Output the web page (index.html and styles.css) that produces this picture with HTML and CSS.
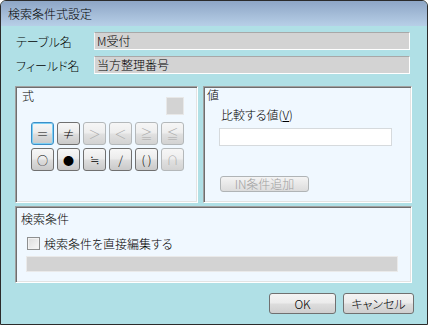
FILE: index.html
```html
<!DOCTYPE html>
<html lang="ja">
<head>
  <meta charset="UTF-8" />
  <title>検索条件式設定</title>
  <link rel="stylesheet" href="styles.css">
</head>
<body>
  <div class="window">
    <div class="titlebar">検索条件式設定</div>
    <div class="content">
      <div class="field-row">
        <span class="label">テーブル名</span>
        <div class="readonly">M受付</div>
      </div>
      <div class="field-row">
        <span class="label">フィールド名</span>
        <div class="readonly">当方整理番号</div>
      </div>

      <div class="groups">
        <div class="group group-expr">
          <div class="expr-top">
            <span class="legend">式</span>
            <span class="swatch"></span>
          </div>
          <div class="op-grid">
            <button class="op focus">＝</button>
            <button class="op">≠</button>
            <button class="op" disabled>＞</button>
            <button class="op" disabled>＜</button>
            <button class="op" disabled>≧</button>
            <button class="op" disabled>≦</button>
            <button class="op op-small">○</button>
            <button class="op op-small">●</button>
            <button class="op">≒</button>
            <button class="op">/</button>
            <button class="op">( )</button>
            <button class="op" disabled>∩</button>
          </div>
        </div>

        <div class="group group-value">
          <div class="legend legend-value">値</div>
          <div class="compare-label">比較する値(<u>V</u>)</div>
          <input class="compare-input" type="text">
          <button class="btn btn-in" disabled>IN条件追加</button>
        </div>
      </div>

      <div class="group group-cond">
        <div class="legend legend-cond">検索条件</div>
        <label class="check-row">
          <span class="checkbox"></span>
          <span>検索条件を直接編集する</span>
        </label>
        <div class="cond-field"></div>
      </div>

      <div class="actions">
        <button class="btn btn-ok">OK</button>
        <button class="btn btn-cancel">キャンセル</button>
      </div>
    </div>
  </div>
</body>
</html>
```

FILE: styles.css
```css
body { margin: 0; font-family: "Noto Sans CJK JP", "Liberation Sans", sans-serif; font-size: 12px; font-weight: 300; color: #000; }

.window { width: 428px; height: 325px; box-sizing: border-box; border: 1px solid #2b2b2b; border-radius: 6px 6px 0 0; background: #b0e0e6; overflow: hidden; }
.titlebar { height: 25px; line-height: 26px; padding-left: 7px; background: linear-gradient(#8ea6c6, #b7cfe7); font-feature-settings: "palt"; }
.content { padding: 6px 14px 0 14px; }

.field-row { display: flex; align-items: center; height: 18px; margin-bottom: 6px; }
.label { width: 78px; margin-left: 1px; font-feature-settings: "palt"; }
.readonly { width: 316px; height: 18px; box-sizing: border-box; padding-left: 2px; line-height: 16px; background: #d3d3d3; border: 1px solid #fff; border-top-color: #a8a8a8; border-left-color: #f4f4f4; }

.groups { display: flex; gap: 5px; margin-top: 12px; }
.group { box-sizing: border-box; background: #f0f8ff; border: 1px solid; border-color: #a0a0a0 #fff #fff #a0a0a0; box-shadow: inset 1px 1px #6e6e6e, inset -1px -1px #e3e3e3; }
.group-expr { width: 183px; height: 117px; }
.group-value { width: 209px; height: 117px; }
.group-cond { width: 397px; height: 77px; margin-top: 3px; }

.legend { line-height: 16px; }
.expr-top { display: flex; justify-content: space-between; padding: 0 13px 0 6px; }
.expr-top .legend { margin-top: 1px; }
.swatch { width: 18px; height: 18px; box-sizing: border-box; margin-top: 10px; background: #d3d3d3; border: 1px solid #e8e8e8; }

.op-grid { display: grid; grid-template-columns: repeat(6, 23px); grid-auto-rows: 23px; gap: 3px; margin: 7px 0 0 15px; }
.op { padding: 0; font-family: "Noto Sans CJK JP", sans-serif; font-size: 12px; font-weight: 300; color: #000; border: 1px solid #707070; border-radius: 3px; background: linear-gradient(#f7f7f7 0%, #ececec 45%, #dcdcdc 55%, #c9c9c9 100%); }
.op-small { font-size: 11px; }
.op:disabled { color: #a8a8a8; border-color: #b4b8ba; background: linear-gradient(#f6f6f6 0%, #eeeeee 45%, #e0e0e0 55%, #d2d2d2 100%); }
.op.focus { border-color: #3c8fc8; box-shadow: inset 0 0 0 1px #7fd0f4; }

.legend-value { padding-left: 3px; }
.compare-label { margin: 4px 0 0 17px; line-height: 16px; font-feature-settings: "palt"; }
.compare-input { display: block; width: 173px; height: 18px; box-sizing: border-box; margin: 5px 0 0 15px; border: 1px solid #d6dadd; background: #fff; }

.btn { display: block; padding: 0; font-family: "Noto Sans CJK JP", sans-serif; font-size: 12px; font-weight: 300; color: #000; border: 1px solid #707070; border-radius: 3px; background: linear-gradient(#f4f4f4 0%, #ebebeb 48%, #dddddd 52%, #cfcfcf 100%); font-feature-settings: "palt"; }
.btn-in { width: 89px; height: 16px; margin: 30px 0 0 16px; line-height: 12px; color: #a0a0a0; border-color: #b0b4b6; background: linear-gradient(#f4f4f4, #dcdcdc); }

.legend-cond { padding-left: 5px; margin-top: 4px; }
.check-row { display: flex; align-items: center; gap: 4px; height: 13px; margin: 10px 0 0 11px; font-feature-settings: "palt"; }
.checkbox { width: 13px; height: 13px; box-sizing: border-box; border: 1px solid #8e8f8f; background: linear-gradient(135deg, #dcdcdc, #f8f8f8); box-shadow: inset 0 0 0 1px #f2f2f2; }
.cond-field { width: 372px; height: 16px; box-sizing: border-box; margin: 6px 0 0 10px; background: #d3d3d3; border: 1px solid #eaeaea; }

.actions { display: flex; justify-content: flex-end; gap: 7px; margin: 10px -1px 0 0; }
.btn-ok { width: 67px; height: 21px; }
.btn-cancel { width: 71px; height: 21px; }
```
